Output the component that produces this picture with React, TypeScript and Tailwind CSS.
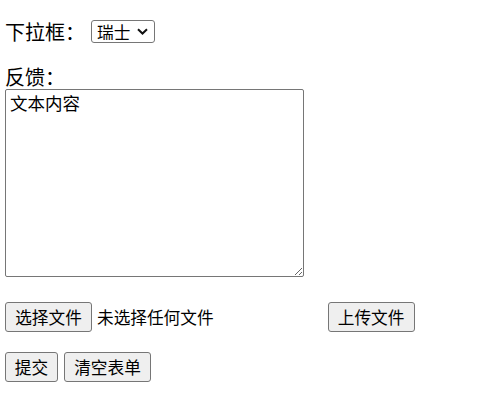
import React from 'react'

const font = { fontFamily: '"Noto Sans CJK SC", "Noto Sans", sans-serif' }

function Btn({ children, className = '' }: { children: React.ReactNode; className?: string }) {
  return (
    <button
      type="button"
      className={`flex h-[30px] shrink-0 items-center justify-center whitespace-nowrap rounded-[3px] border border-[#767676] bg-[#efefef] px-0 text-[16.67px] leading-none text-black ${className}`}
    >
      {children}
    </button>
  )
}

export default function App() {
  return (
    <div className="min-h-[400px] w-[481px] bg-white pl-[5px] pt-[20px] text-black" style={font}>
      {/* 下拉框 */}
      <div className="flex h-[23px] items-center">
        <span className="text-[20px] leading-[23px]">下拉框：</span>
        <div className="relative ml-[6px]">
          <select
            defaultValue="ch"
            className="h-[23px] w-[64px] appearance-none rounded-[3px] border border-[#767676] bg-white pl-[5px] text-[16.67px] leading-none text-black outline-none"
            style={font}
          >
            <option value="ch">瑞士</option>
          </select>
          <svg
            className="pointer-events-none absolute right-[7px] top-[8px]"
            width="11"
            height="7"
            viewBox="0 0 11 7"
            fill="none"
          >
            <path d="M1 1.2 L5.5 5.5 L10 1.2" stroke="#111" strokeWidth="2" />
          </svg>
        </div>
      </div>

      {/* 反馈 */}
      <div className="mt-[22px] h-[24px] text-[20px] leading-[23px]">反馈：</div>
      <textarea
        defaultValue="文本内容"
        className="block h-[188px] w-[299px] rounded-[2px] border border-[#767676] px-[4px] py-[2px] text-[17.5px] leading-[21px] text-black outline-none"
        style={font}
      />

      {/* 文件 */}
      <div className="mt-[25px] flex items-center">
        <Btn className="w-[87px]">选择文件</Btn>
        <span className="ml-[5px] whitespace-nowrap text-[16.67px] leading-none">未选择任何文件</span>
        <Btn className="ml-[114px] w-[87px]">上传文件</Btn>
      </div>

      {/* 按钮 */}
      <div className="mt-[20px] flex items-center gap-[6px]">
        <Btn className="w-[53px]">提交</Btn>
        <Btn className="w-[87px]">清空表单</Btn>
      </div>
    </div>
  )
}
